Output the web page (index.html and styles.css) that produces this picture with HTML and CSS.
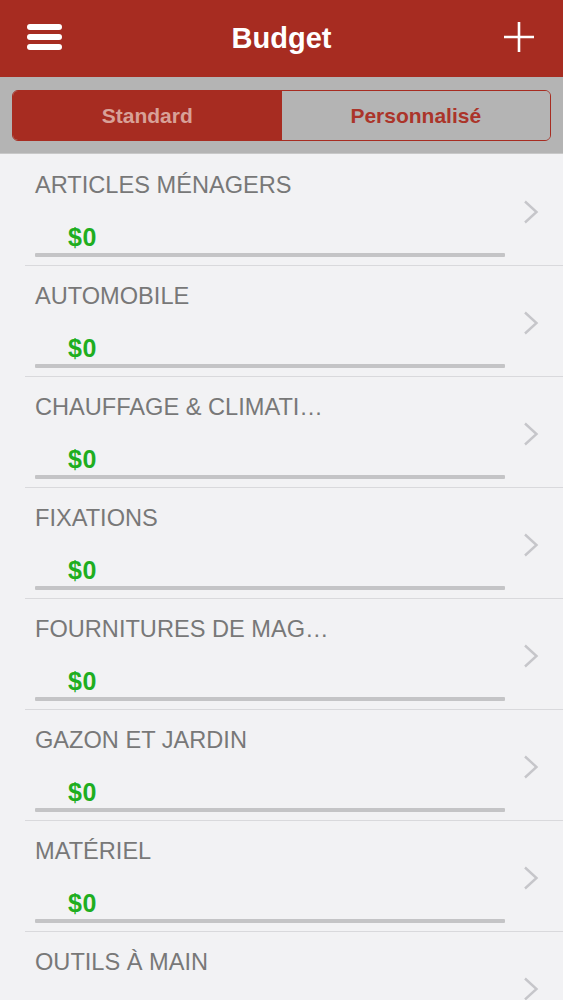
FILE: index.html
```html
<!DOCTYPE html>
<html>
<head>
<meta charset="utf-8">
<link rel="stylesheet" href="styles.css">
</head>
<body>
<div class="app">
  <header class="topbar">
    <div class="menu"><span></span><span></span><span></span></div>
    <h1 class="title">Budget</h1>
    <svg class="plus" width="32" height="32" viewBox="0 0 32 32"><path d="M16 1V31M1 16H31" stroke="#fff" stroke-width="2.6" fill="none"/></svg>
  </header>
  <div class="segbar">
    <div class="seg">
      <div class="seg-item active">Standard</div>
      <div class="seg-item">Personnalisé</div>
    </div>
  </div>
  <ul class="list">
    <li class="row"><div class="info"><div class="name">ARTICLES MÉNAGERS</div><div class="amount">$0</div><div class="bar"></div></div><svg class="chev" width="16" height="24" viewBox="0 0 16 24"><path d="M2 1.5L13.5 12L2 22.5" stroke="#c6c6ca" stroke-width="2.4" fill="none"/></svg></li>
    <li class="row"><div class="info"><div class="name">AUTOMOBILE</div><div class="amount">$0</div><div class="bar"></div></div><svg class="chev" width="16" height="24" viewBox="0 0 16 24"><path d="M2 1.5L13.5 12L2 22.5" stroke="#c6c6ca" stroke-width="2.4" fill="none"/></svg></li>
    <li class="row"><div class="info"><div class="name">CHAUFFAGE &amp; CLIMATI…</div><div class="amount">$0</div><div class="bar"></div></div><svg class="chev" width="16" height="24" viewBox="0 0 16 24"><path d="M2 1.5L13.5 12L2 22.5" stroke="#c6c6ca" stroke-width="2.4" fill="none"/></svg></li>
    <li class="row"><div class="info"><div class="name">FIXATIONS</div><div class="amount">$0</div><div class="bar"></div></div><svg class="chev" width="16" height="24" viewBox="0 0 16 24"><path d="M2 1.5L13.5 12L2 22.5" stroke="#c6c6ca" stroke-width="2.4" fill="none"/></svg></li>
    <li class="row"><div class="info"><div class="name">FOURNITURES DE MAG…</div><div class="amount">$0</div><div class="bar"></div></div><svg class="chev" width="16" height="24" viewBox="0 0 16 24"><path d="M2 1.5L13.5 12L2 22.5" stroke="#c6c6ca" stroke-width="2.4" fill="none"/></svg></li>
    <li class="row"><div class="info"><div class="name">GAZON ET JARDIN</div><div class="amount">$0</div><div class="bar"></div></div><svg class="chev" width="16" height="24" viewBox="0 0 16 24"><path d="M2 1.5L13.5 12L2 22.5" stroke="#c6c6ca" stroke-width="2.4" fill="none"/></svg></li>
    <li class="row"><div class="info"><div class="name">MATÉRIEL</div><div class="amount">$0</div><div class="bar"></div></div><svg class="chev" width="16" height="24" viewBox="0 0 16 24"><path d="M2 1.5L13.5 12L2 22.5" stroke="#c6c6ca" stroke-width="2.4" fill="none"/></svg></li>
    <li class="row"><div class="info"><div class="name">OUTILS À MAIN</div></div><svg class="chev" width="16" height="24" viewBox="0 0 16 24"><path d="M2 1.5L13.5 12L2 22.5" stroke="#c6c6ca" stroke-width="2.4" fill="none"/></svg></li>
  </ul>
</div>
</body>
</html>
```
FILE: styles.css
```css
* { box-sizing: border-box; }
html, body { margin: 0; padding: 0; }
body {
  width: 563px;
  height: 1000px;
  overflow: hidden;
  background: #f2f2f4;
  font-family: "Liberation Sans", Arial, sans-serif;
}
.app { display: flex; flex-direction: column; }
.topbar {
  height: 77px;
  background: #a72c21;
  display: flex;
  align-items: center;
  justify-content: space-between;
  padding: 0 27px 0 27px;
}
.menu {
  width: 35px;
  display: flex;
  flex-direction: column;
  gap: 4px;
  margin-top: -3px;
}
.menu span {
  display: block;
  height: 6px;
  border-radius: 3px;
  background: #fff;
}
.title {
  margin: 0;
  color: #fff;
  font-size: 29px;
  font-weight: bold;
  line-height: 1;
  margin-left: -2px;
  margin-top: -1px;
}
.plus { margin-right: 1px; margin-top: -3px; }
.segbar {
  height: 77px;
  background: #b4b4b4;
  padding: 13px 12px 0 12px;
  border-bottom: 1px solid #c8c8c8;
}
.seg {
  height: 51px;
  display: flex;
  border: 1.5px solid #a72c21;
  border-radius: 6px;
  overflow: hidden;
}
.seg-item {
  flex: 1;
  display: flex;
  align-items: center;
  justify-content: center;
  font-size: 21px;
  font-weight: bold;
  color: #ab342a;
  background: #b4b4b4;
}
.seg-item.active {
  background: #a72c21;
  color: #d8a198;
}
.list { list-style: none; margin: 0; padding: 1px 0 0 25px; }
.row {
  height: 111px;
  border-bottom: 1px solid #d9d9dc;
  display: flex;
  align-items: flex-start;
}
.info {
  width: 480px;
  padding: 16px 0 0 10px;
}
.name {
  font-size: 23.6px;
  color: #787878;
  line-height: 28px;
  white-space: nowrap;
}
.amount {
  margin: 26px 0 0 33px;
  font-size: 25px;
  font-weight: bold;
  color: #1fae1f;
  line-height: 25px;
  letter-spacing: 0.5px;
}
.bar {
  margin-top: 3px;
  height: 4px;
  width: 470px;
  background: #c4c4c6;
  border-radius: 1px;
}
.chev { margin: 45px 0 0 18px; }
```
